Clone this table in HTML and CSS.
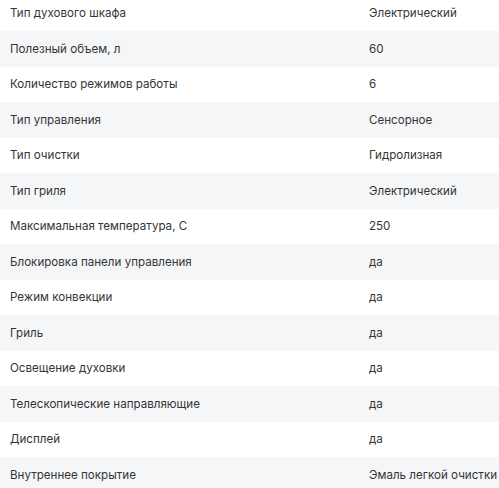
FILE: index.html
```html
<!DOCTYPE html>
<html lang="ru">
<head>
<meta charset="utf-8">
<link rel="stylesheet" href="styles.css">
</head>
<body>
<div class="specs">
  <div class="row"><div class="name">Тип духового шкафа</div><div class="val">Электрический</div></div>
  <div class="row"><div class="name">Полезный объем, л</div><div class="val">60</div></div>
  <div class="row"><div class="name">Количество режимов работы</div><div class="val">6</div></div>
  <div class="row"><div class="name">Тип управления</div><div class="val">Сенсорное</div></div>
  <div class="row"><div class="name">Тип очистки</div><div class="val">Гидролизная</div></div>
  <div class="row"><div class="name">Тип гриля</div><div class="val">Электрический</div></div>
  <div class="row"><div class="name">Максимальная температура, С</div><div class="val">250</div></div>
  <div class="row"><div class="name">Блокировка панели управления</div><div class="val">да</div></div>
  <div class="row"><div class="name">Режим конвекции</div><div class="val">да</div></div>
  <div class="row"><div class="name">Гриль</div><div class="val">да</div></div>
  <div class="row"><div class="name">Освещение духовки</div><div class="val">да</div></div>
  <div class="row"><div class="name">Телескопические направляющие</div><div class="val">да</div></div>
  <div class="row"><div class="name">Дисплей</div><div class="val">да</div></div>
  <div class="row"><div class="name">Внутреннее покрытие</div><div class="val">Эмаль легкой очистки</div></div>
</div>
</body>
</html>
```
FILE: styles.css
```css
html, body {
  margin: 0;
  padding: 0;
  background: #fff;
  overflow: hidden;
}
body {
  font-family: Inter, "Noto Sans", sans-serif;
  font-size: 11.6px;
  color: #353535;
}
.specs {
  margin-top: -4.5px;
}
.row {
  display: grid;
  grid-template-columns: 369px 1fr;
  height: 35.5px;
  align-items: center;
}
.row:nth-child(even) {
  background: #f5f6f8;
}
.name {
  padding-left: 10px;
}
.val {
  white-space: nowrap;
}
```
